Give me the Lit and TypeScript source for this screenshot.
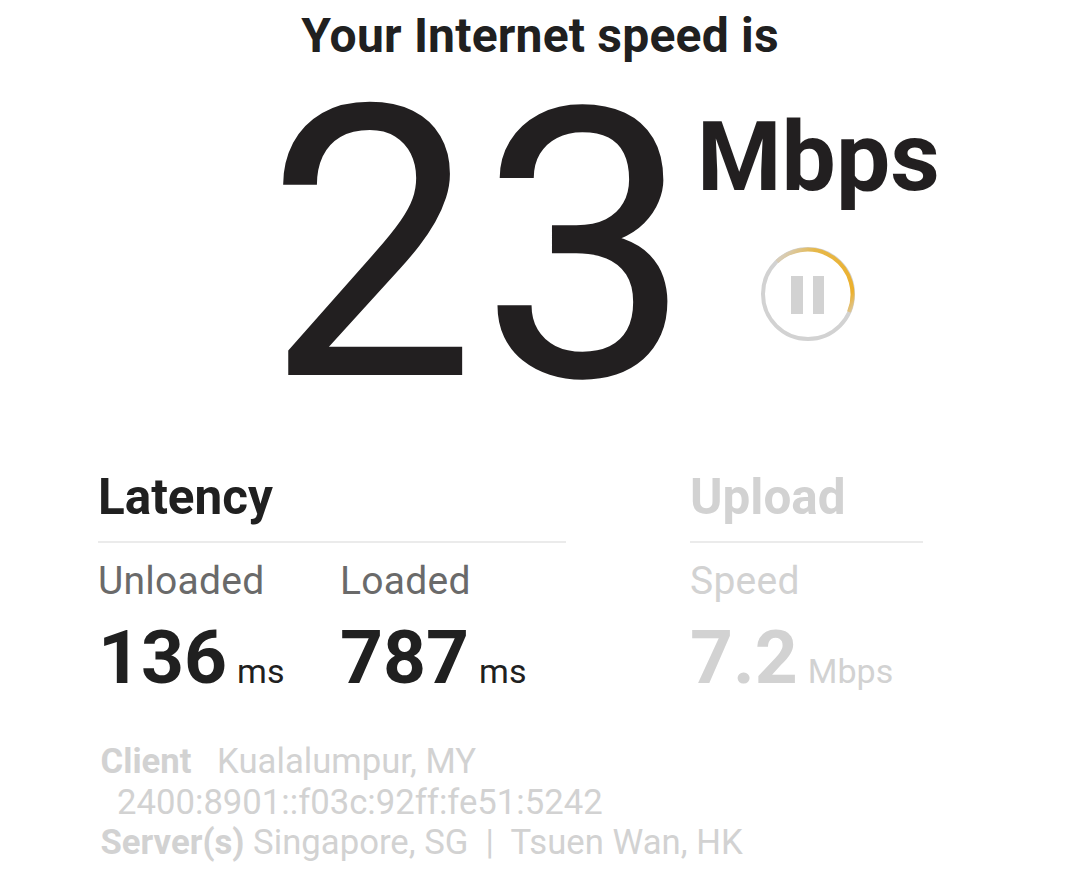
import { html, LitElement, css } from "lit";
import { customElement, property } from "lit/decorators.js";

@customElement("speed-metric")
class SpeedMetric extends LitElement {
  static styles = css`
    :host {
      display: block;
    }
    .label {
      font-size: 39px;
      line-height: 46px;
      letter-spacing: 0.25px;
      color: #6a6a6a;
    }
    .reading {
      display: flex;
      align-items: baseline;
      gap: 10px;
      margin-top: 9px;
      line-height: 88px;
    }
    .value {
      font-size: 75px;
      font-weight: 700;
    }
    .unit {
      font-size: 34px;
    }
    :host([pending]) .label {
      color: inherit;
    }
  `;

  @property() label = "";
  @property() value = "";
  @property() unit = "";

  render() {
    return html`
      <div class="label">${this.label}</div>
      <div class="reading">
        <span class="value">${this.value}</span>
        <span class="unit">${this.unit}</span>
      </div>
    `;
  }
}

@customElement("app-root")
class AppRoot extends LitElement {
  static styles = css`
    :host {
      display: block;
      box-sizing: border-box;
      width: 1080px;
      height: 878px;
      overflow: hidden;
      background: #ffffff;
      color: #202020;
      font-family: Roboto, "Liberation Sans", sans-serif;
      white-space: nowrap;
    }
    .title {
      padding-top: 8px;
      text-align: center;
      font-size: 48px;
      font-weight: 700;
      line-height: 56px;
      letter-spacing: 0.2px;
    }
    .result {
      display: flex;
      height: 376px;
      padding-left: 266px;
      color: #221f20;
    }
    .number {
      display: flex;
      align-items: baseline;
      width: 431px;
      padding-top: 7px;
      font-size: 377px;
      line-height: 352px;
    }
    .digit:first-child {
      width: 214px;
      font-size: 379px;
      transform: translateY(-1px) scaleX(0.986);
      transform-origin: left;
    }
    .side {
      width: 240px;
      padding-top: 35px;
    }
    .units {
      font-size: 96.6px;
      font-weight: 700;
      line-height: 116px;
    }
    .pause {
      display: block;
      margin: 30px 0 0 62px;
    }
    .details {
      display: flex;
      gap: 124px;
      padding-left: 98px;
    }
    .latency {
      width: 468px;
    }
    .upload {
      width: 233px;
      color: #d2d2d2;
    }
    .heading {
      height: 73px;
      padding-top: 28px;
      border-bottom: 2px solid #ebebeb;
      font-size: 49.4px;
      font-weight: 700;
      line-height: 58px;
    }
    .metrics {
      display: grid;
      grid-template-columns: 242px auto;
      padding-top: 15px;
    }
    .info {
      padding: 26px 0 0 100.5px;
      color: #d2d2d2;
      font-size: 34.7px;
      line-height: 40.5px;
    }
    .place {
      margin-left: 17px;
    }
    .address {
      padding-left: 16.5px;
    }
  `;

  render() {
    return html`
      <div class="title">Your Internet speed is</div>
      <div class="result">
        <div class="number">
          <span class="digit">2</span>
          <span class="digit">3</span>
        </div>
        <div class="side">
          <div class="units">Mbps</div>
          <svg class="pause" width="98" height="98" viewBox="0 0 98 98" fill="none">
            <defs>
              <linearGradient id="sweep" gradientUnits="userSpaceOnUse" x1="18" y1="18" x2="92" y2="72">
                <stop offset="0" stop-color="#d8cdb8" />
                <stop offset="0.25" stop-color="#e6b84a" />
                <stop offset="0.85" stop-color="#ecb02c" />
                <stop offset="1" stop-color="#d8cdb8" />
              </linearGradient>
            </defs>
            <circle cx="49" cy="49" r="45" stroke="#d2d2d2" stroke-width="4" />
            <path d="M18 16.5A45 45 0 0 1 90 67" stroke="url(#sweep)" stroke-width="4" />
            <path d="M32 31h12v38H32zM54 31h11v38H54z" fill="#d2d2d2" />
          </svg>
        </div>
      </div>
      <div class="details">
        <div class="latency">
          <div class="heading">Latency</div>
          <div class="metrics">
            <speed-metric label="Unloaded" value="136" unit="ms"></speed-metric>
            <speed-metric label="Loaded" value="787" unit="ms"></speed-metric>
          </div>
        </div>
        <div class="upload">
          <div class="heading">Upload</div>
          <div class="metrics">
            <speed-metric pending label="Speed" value="7.2" unit="Mbps"></speed-metric>
          </div>
        </div>
      </div>
      <div class="info">
        <div><b>Client</b> <span class="place">Kualalumpur, MY</span></div>
        <div class="address">2400:8901::f03c:92ff:fe51:5242</div>
        <div><b>Server(s)</b> Singapore, SG &nbsp;|&nbsp; Tsuen Wan, HK</div>
      </div>
    `;
  }
}
